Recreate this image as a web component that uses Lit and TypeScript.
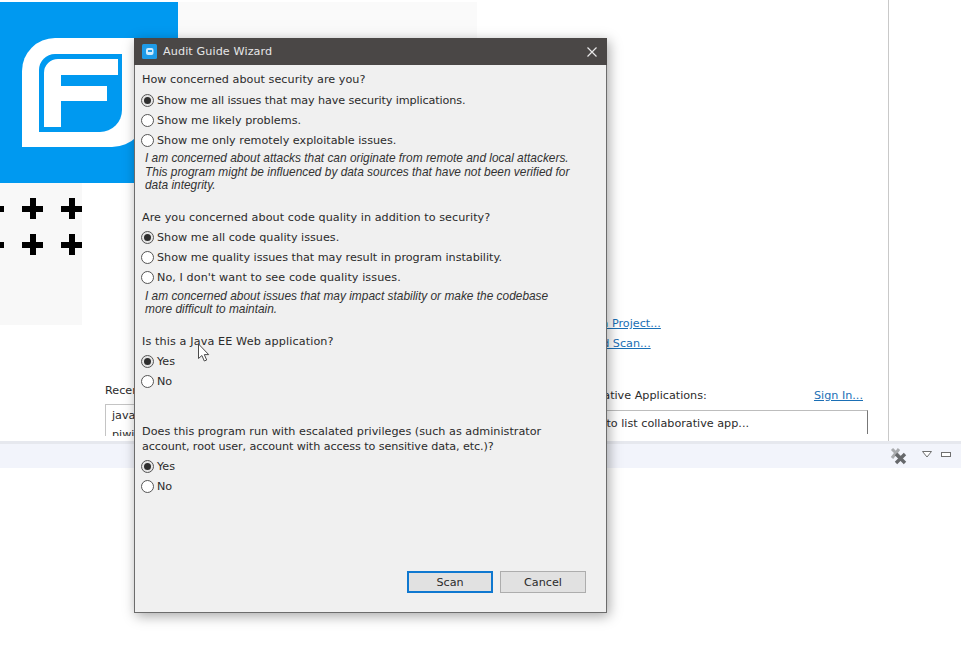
import { LitElement, html, css, svg } from "lit";
import { customElement } from "lit/decorators.js";

interface Line {
  text: string;
  track?: number;
}

interface Group {
  cls: string;
  lines: Line[];
  options: { text: string; on?: boolean; track?: number }[];
  notes?: string[];
}

const groups: Group[] = [
  {
    cls: "g1",
    lines: [{ text: "How concerned about security are you?", track: 0.03 }],
    options: [
      { text: "Show me all issues that may have security implications.", on: true, track: -0.11 },
      { text: "Show me likely problems.", track: 0.04 },
      { text: "Show me only remotely exploitable issues." },
    ],
    notes: [
      "I am concerned about attacks that can originate from remote and local attackers.",
      "This program might be influenced by data sources that have not been verified for",
      "data integrity.",
    ],
  },
  {
    cls: "g2",
    lines: [{ text: "Are you concerned about code quality in addition to security?", track: 0.05 }],
    options: [
      { text: "Show me all code quality issues.", on: true },
      { text: "Show me quality issues that may result in program instability.", track: -0.02 },
      { text: "No, I don't want to see code quality issues.", track: 0.07 },
    ],
    notes: [
      "I am concerned about issues that may impact stability or make the codebase",
      "more difficult to maintain.",
    ],
  },
  {
    cls: "g3",
    lines: [{ text: "Is this a Java EE Web application?", track: 0.12 }],
    options: [{ text: "Yes", on: true }, { text: "No" }],
  },
  {
    cls: "g4",
    lines: [
      { text: "Does this program run with escalated privileges (such as administrator", track: 0.015 },
      { text: "account, root user, account with access to sensitive data, etc.)?", track: -0.09 },
    ],
    options: [{ text: "Yes", on: true }, { text: "No" }],
  },
];

@customElement("app-root")
export class AppRoot extends LitElement {
  static styles = css`
    :host {
      display: block;
      position: relative;
      width: 961px;
      height: 667px;
      overflow: hidden;
      background: #fff;
      font-family: "DejaVu Sans", sans-serif;
      font-size: 11.2px;
      color: #2b2b2b;
    }
    .stage {
      width: 889px;
      height: 441px;
      box-sizing: border-box;
      border-right: 1px solid #c9c9c9;
      display: flex;
      flex-direction: column;
      overflow: hidden;
    }
    .hero {
      display: flex;
      padding-top: 2px;
    }
    .left {
      width: 178px;
      flex: none;
    }
    .logo {
      display: block;
      width: 178px;
      height: 181px;
    }
    .plus-panel {
      width: 82px;
      height: 142px;
      background: #f8f8f8;
      overflow: hidden;
      box-sizing: border-box;
      padding-top: 15px;
    }
    .plus-row {
      display: flex;
      gap: 18px;
      margin-left: -17px;
      margin-bottom: 15px;
    }
    .plus {
      width: 21px;
      height: 21px;
      flex: none;
      background:
        linear-gradient(#000, #000) center / 100% 6px no-repeat,
        linear-gradient(#000, #000) center / 6px 100% no-repeat;
    }
    .pale {
      width: 299px;
      height: 40px;
      background: #fafafa;
    }
    .links {
      position: absolute;
      left: 554px;
      top: 316px;
      width: 200px;
      display: flex;
      flex-direction: column;
      gap: 5px;
    }
    a {
      color: #1a6fb5;
      text-decoration: underline;
      line-height: 15px;
    }
    .lower {
      position: absolute;
      left: 105px;
      top: 383px;
      width: 763px;
      display: flex;
      justify-content: space-between;
    }
    .recent {
      width: 300px;
    }
    .lbl {
      line-height: 15px;
      height: 15px;
      white-space: nowrap;
    }
    .recent-box {
      margin-top: 6px;
      height: 32px;
      box-sizing: border-box;
      border: 1px solid #c4c4c4;
      border-bottom: 0;
      padding: 1px 6px;
      line-height: 19px;
      overflow: hidden;
    }
    .collab {
      width: 311px;
    }
    .collab-head {
      display: flex;
      justify-content: space-between;
      padding-right: 5px;
      padding-top: 5px;
    }
    .collab-box {
      margin-top: 7px;
      height: 24px;
      box-sizing: border-box;
      border: 1px solid #bdbdbd;
      border-bottom: 0;
      border-right-color: #777;
      padding: 4px 6px 0 0;
      text-align: right;
      line-height: 18px;
      white-space: nowrap;
      overflow: hidden;
    }
    .collab-text {
      margin-right: 112px;
    }
    .bar {
      height: 24px;
      background: #f2f4fb;
      border-top: 3px solid #e6e8ee;
      display: flex;
      justify-content: flex-end;
      align-items: center;
      gap: 9px;
      padding-right: 10px;
    }
    .bar svg {
      display: block;
    }
    .bar .del {
      margin-right: 5px;
    }
    .bar .up {
      margin-bottom: 4px;
    }
    .dialog {
      position: absolute;
      left: 134px;
      top: 38px;
      width: 473px;
      height: 575px;
      box-sizing: border-box;
      border: 1px solid #6c6c6c;
      border-top: 0;
      background: #f0f0f0;
      box-shadow: 2px 3px 12px rgba(0, 0, 0, 0.35);
      display: flex;
      flex-direction: column;
    }
    .title {
      height: 27px;
      flex: none;
      margin: 0 -1px;
      background: #4a4746;
      color: #e6e6e6;
      display: flex;
      align-items: center;
      padding: 0 9px 0 8px;
      gap: 6px;
      letter-spacing: 0.1px;
    }
    .title .t {
      flex: 1;
    }
    .body {
      flex: 1;
      padding: 0 7px;
      display: flex;
      flex-direction: column;
    }
    .q {
      line-height: 15px;
      white-space: nowrap;
    }
    .opt {
      height: 20px;
      display: flex;
      align-items: center;
      gap: 3px;
      white-space: nowrap;
    }
    .q + .opt {
      margin-top: 3px;
    }
    .radio {
      width: 13px;
      height: 13px;
      margin-left: -1px;
      box-sizing: border-box;
      border: 1px solid #555;
      border-radius: 50%;
      background: #fff;
      flex: none;
      display: flex;
      align-items: center;
      justify-content: center;
    }
    .radio.on {
      background: #e6e6e6;
    }
    .radio.on::after {
      content: "";
      width: 7px;
      height: 7px;
      border-radius: 50%;
      background: #2e2e2e;
    }
    .notes {
      margin: 2px 0 0 3px;
      font-family: "Liberation Sans", sans-serif;
      font-style: italic;
      font-size: 11.9px;
      line-height: 13.5px;
      color: #333;
      white-space: nowrap;
    }
    .g1 {
      margin-top: 7px;
    }
    .g2 {
      margin-top: 17px;
    }
    .g3 {
      margin-top: 17px;
    }
    .g4 {
      margin-top: 32px;
    }
    .actions {
      margin-top: auto;
      display: flex;
      justify-content: flex-end;
      gap: 7px;
      padding: 0 20px 19px 0;
      margin-right: -7px;
      margin-left: -7px;
    }
    .btn {
      width: 86px;
      height: 22px;
      box-sizing: border-box;
      border: 1px solid #adadad;
      background: #e1e1e1;
      font: inherit;
      color: #2b2b2b;
      padding: 0;
    }
    .btn.primary {
      border: 2px solid #0f78d0;
    }
    .cursor {
      position: absolute;
      left: 197px;
      top: 343px;
    }
  `;

  private logo() {
    return html`<svg class="logo" viewBox="0 0 178 181">
      <rect width="178" height="181" fill="#0099f0" />
      <path d="M22 145V69a33 33 0 0 1 33-33h92v74a35 35 0 0 1-35 35z" fill="#fff" />
      <path d="M39 130V68a16 16 0 0 1 16-16h67v56a22 22 0 0 1-22 22z" fill="#0099f0" />
      <path d="M44 125V71a14 14 0 0 1 14-14h60v16H61v11h46v15H61v26z" fill="#fff" />
    </svg>`;
  }

  private track(value?: number) {
    return value ? `letter-spacing:${value}px` : "";
  }

  private group(g: Group) {
    return html`<div class=${g.cls}>
      ${g.lines.map((l) => html`<div class="q" style=${this.track(l.track)}>${l.text}</div>`)}
      ${g.options.map(
        (o) => html`<div class="opt">
          <span class="radio ${o.on ? "on" : ""}"></span>
          <span style=${this.track(o.track)}>${o.text}</span>
        </div>`
      )}
      ${g.notes
        ? html`<div class="notes">${g.notes.map((n) => html`<div>${n}</div>`)}</div>`
        : ""}
    </div>`;
  }

  render() {
    const plusRow = html`<div class="plus-row">
      <span class="plus"></span><span class="plus"></span><span class="plus"></span>
    </div>`;
    return html`
      <div class="stage">
        <div class="hero">
          <div class="left">
            ${this.logo()}
            <div class="plus-panel">${plusRow}${plusRow}</div>
          </div>
          <div class="pale"></div>
        </div>
      </div>
      <div class="links">
        <a>Scan Java Project...</a>
        <a>Advanced Scan...</a>
      </div>
      <div class="lower">
        <div class="recent">
          <div class="lbl">Recent Projects:</div>
          <div class="recent-box">java-sec-code<br />piwigo</div>
        </div>
        <div class="collab">
          <div class="collab-head">
            <span class="lbl">Collaborative Applications:</span>
            <a>Sign In...</a>
          </div>
          <div class="collab-box"><span class="collab-text">Sign in to list collaborative app...</span></div>
        </div>
      </div>
      <div class="bar">
        <svg class="del" width="18" height="18" viewBox="0 0 18 18">
          <path d="M2 2l9 9M9 2l-7 9" stroke="#a9abae" stroke-width="3" fill="none" />
          <path d="M6 7l9 9M15 7l-9 9" stroke="#66686b" stroke-width="3.4" fill="none" />
        </svg>
        <svg class="up" width="10" height="7" viewBox="0 0 10 7">
          <path d="M.5.5h9L5 6z" fill="#fff" stroke="#707070" />
        </svg>
        <svg class="up" width="10" height="5" viewBox="0 0 10 5">
          <rect x=".5" y=".5" width="9" height="4" fill="#fff" stroke="#707070" />
        </svg>
      </div>
      <div class="dialog">
        <div class="title">
          <svg width="15" height="15" viewBox="0 0 15 15">
            <rect width="15" height="15" rx="1.5" fill="#1e9be8" />
            <rect x="4" y="4" width="7.5" height="7" rx="2" fill="#cdebff" />
            <rect x="6" y="6" width="4" height="2" fill="#1e9be8" />
          </svg>
          <span class="t">Audit Guide Wizard</span>
          <svg width="12" height="12" viewBox="0 0 12 12">
            <path d="M1.5 1.5l9 9M10.5 1.5l-9 9" stroke="#e8e8e8" stroke-width="1.2" fill="none" />
          </svg>
        </div>
        <div class="body">
          ${groups.map((g) => this.group(g))}
          <div class="actions">
            <button class="btn primary">Scan</button>
            <button class="btn">Cancel</button>
          </div>
        </div>
      </div>
      <svg class="cursor" width="14" height="20" viewBox="0 0 14 20">
        ${svg`<path d="M1.5 1v14.5l3.4-3 2.4 5.5 2.4-1-2.4-5.4h4.4z" fill="#fff" stroke="#4a4a4a" stroke-width="1" />`}
      </svg>
    `;
  }
}
